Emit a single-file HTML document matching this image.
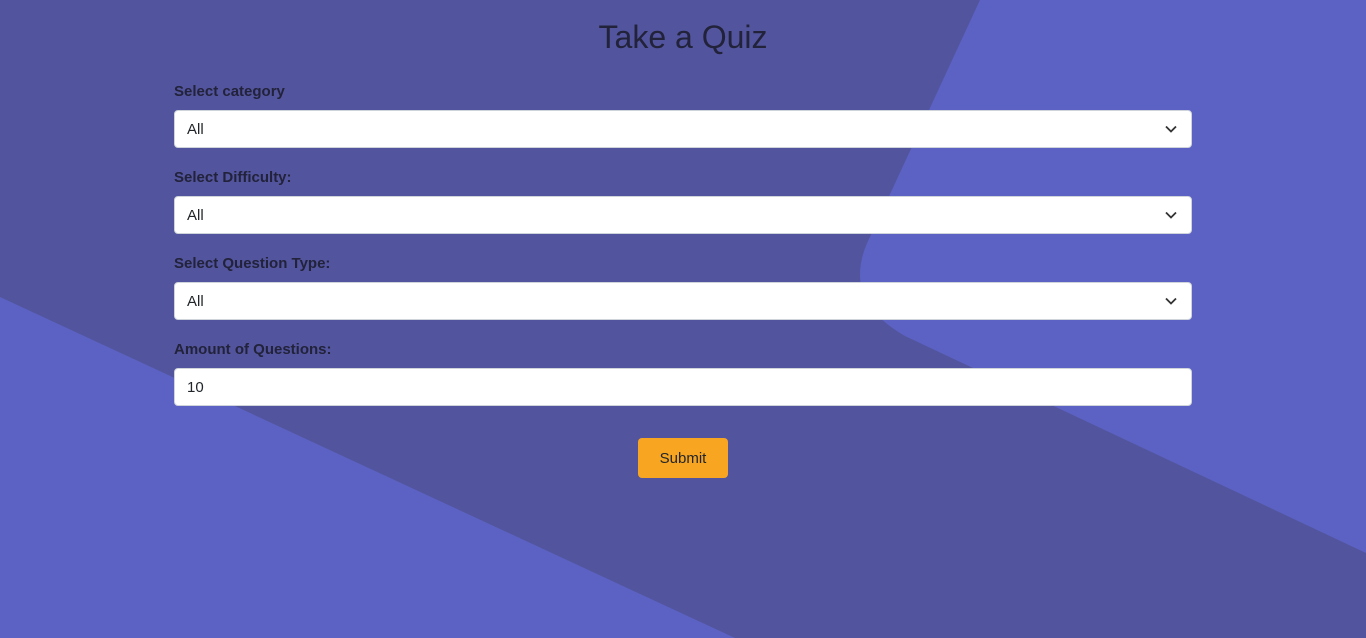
<!DOCTYPE html>
<html><head><meta charset="utf-8"><style>
*{box-sizing:border-box;margin:0;padding:0}
html,body{width:1366px;height:638px;overflow:hidden;background:#52559e;font-family:"Liberation Sans",sans-serif;color:#212529}
svg.bg{position:absolute;left:0;top:0}
h1{position:absolute;top:19px;left:0;width:1366px;text-align:center;font-size:32px;font-weight:normal;color:#22223a}
.lbl{position:absolute;left:174px;font-size:15px;font-weight:bold;color:#22223a}
.in{position:absolute;left:174px;width:1018px;height:38px;background:#fff;border:1px solid #ced4da;border-radius:4px;font-size:15px;padding:10px 12px 0;color:#212529}
.in svg{position:absolute;right:14px;top:14px}
.btn{position:absolute;left:638px;top:438px;width:90px;height:40px;background:#f8a622;border-radius:4px;font-size:15px;text-align:center;line-height:42px;color:#212529}
</style></head><body>
<svg class="bg" width="1366" height="638"><path d="M0 297 L735 638 L0 638 Z" fill="#5c62c3"/><path d="M980 0 L1366 0 L1366 553 L905 336 Q860 310 860 275 Q860 255 872 233 Z" fill="#5c62c3"/></svg>
<h1>Take a Quiz</h1>
<div class="lbl" style="top:83px">Select category</div>
<div class="in" style="top:110px">All<svg width="12" height="8"><path d="M1 1.5 L6 6.5 L11 1.5" stroke="#333" stroke-width="1.8" fill="none"/></svg></div>
<div class="lbl" style="top:169px">Select Difficulty:</div>
<div class="in" style="top:196px">All<svg width="12" height="8"><path d="M1 1.5 L6 6.5 L11 1.5" stroke="#333" stroke-width="1.8" fill="none"/></svg></div>
<div class="lbl" style="top:255px">Select Question Type:</div>
<div class="in" style="top:282px">All<svg width="12" height="8"><path d="M1 1.5 L6 6.5 L11 1.5" stroke="#333" stroke-width="1.8" fill="none"/></svg></div>
<div class="lbl" style="top:341px">Amount of Questions:</div>
<div class="in" style="top:368px">10</div>
<div class="btn">Submit</div>
</body></html>
